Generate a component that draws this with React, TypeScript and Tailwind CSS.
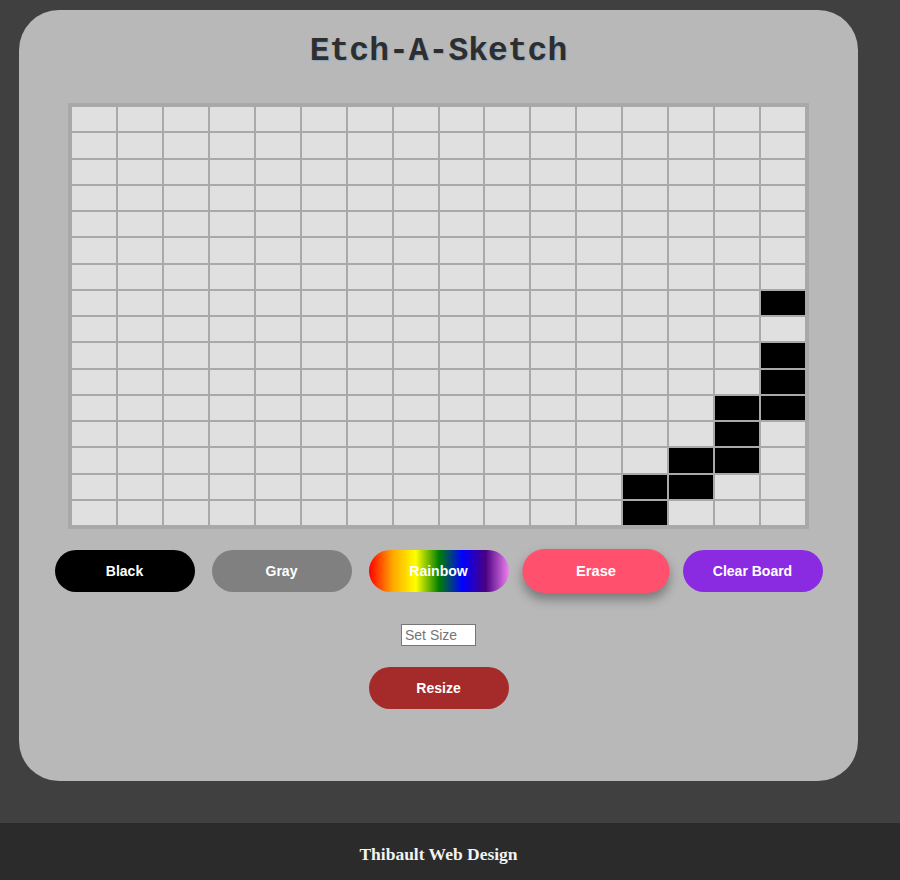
import React from "react";

const SIZE = 16;
// cells that were drawn on, "row-col"
const painted = new Set([
  "7-15", "9-15", "10-15", "11-14", "11-15", "12-14",
  "13-13", "13-14", "14-12", "14-13", "15-12",
]);

function Board() {
  const cells = [];
  for (let r = 0; r < SIZE; r++) {
    for (let c = 0; c < SIZE; c++) {
      const on = painted.has(`${r}-${c}`);
      cells.push(
        <div
          key={`${r}-${c}`}
          className={`border border-[#a9a9a9] ${on ? "bg-black" : "bg-[#e0e0e0]"}`}
        />
      );
    }
  }
  return (
    <div className="mt-[31px] w-[741px] h-[426px] border-[3px] border-[#a9a9a9] grid grid-cols-16 grid-rows-16">
      {cells}
    </div>
  );
}

export default function App() {
  const btn = "w-[140px] h-[42px] rounded-full text-white font-bold text-[14px] flex items-center justify-center";

  return (
    <div className="min-h-screen bg-[#404040] flex flex-col" style={{ fontFamily: '"Liberation Sans", Arial, sans-serif' }}>
      <div className="mt-[10px] ml-[19px] w-[839px] bg-[#b8b8b8] rounded-[40px] flex flex-col items-center pt-[22px] pb-[72px]">
        <h1
          className="text-[33px] leading-[40px] font-bold text-[#2e2e2e] [text-shadow:1px_1px_1px_#8aa9c4]"
          style={{ fontFamily: '"Liberation Mono", "Courier New", monospace' }}
        >
          Etch-A-Sketch
        </h1>

        <Board />

        <div className="mt-[21px] flex gap-[17px]">
          <button className={`${btn} bg-black`}>Black</button>
          <button className={`${btn} bg-[#808080]`}>Gray</button>
          <button className={`${btn} bg-[linear-gradient(to_right,red,orange,yellow,green,blue,indigo,violet)]`}>Rainbow</button>
          <button className={`${btn} bg-[#ff506e] scale-105 shadow-[0_6px_10px_rgba(0,0,0,0.35)]`}>Erase</button>
          <button className={`${btn} bg-[#8a2be2]`}>Clear Board</button>
        </div>

        <input
          type="text"
          placeholder="Set Size"
          className="mt-[32px] w-[75px] h-[22px] bg-white border border-[#767676] px-[3px] text-[14px] text-black placeholder:text-[#757575]"
        />

        <button className={`${btn} mt-[21px] bg-[#a52a2a]`}>Resize</button>
      </div>

      <footer className="mt-[42px] h-[57px] bg-[#2b2b2b] flex items-center justify-center pt-[6px] pr-[23px]">
        <span
          className="text-[#f2f2f2] font-bold text-[17.5px]"
          style={{ fontFamily: '"Liberation Serif", "Times New Roman", serif' }}
        >
          Thibault Web Design
        </span>
      </footer>
    </div>
  );
}
